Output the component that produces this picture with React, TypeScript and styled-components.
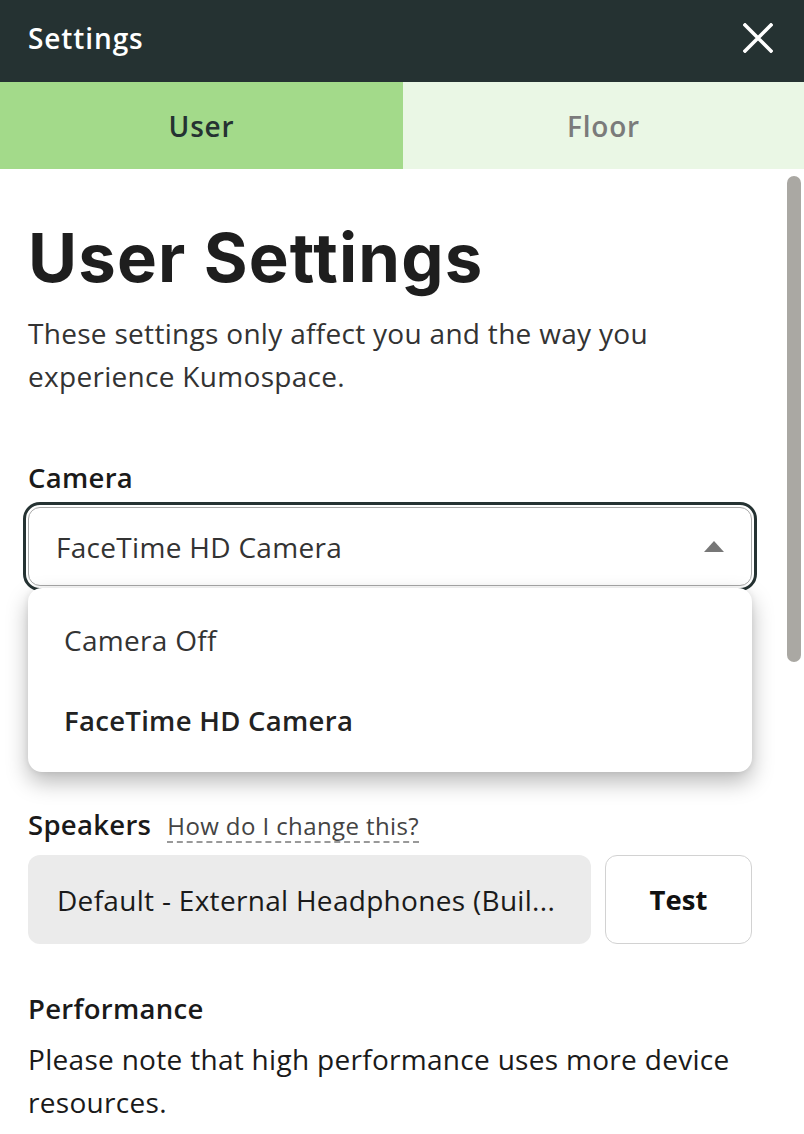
import React from "react";
import styled, { createGlobalStyle } from "styled-components";

const GlobalStyle = createGlobalStyle`
  html, body { margin: 0; padding: 0; background: #ffffff; }
  body { font-family: "Open Sans", "Noto Sans", Arial, sans-serif; color: #222; }
  * { box-sizing: border-box; }
`;

const Modal = styled.div`
  width: 804px;
  height: 1134px;
  display: flex;
  flex-direction: column;
  overflow: hidden;
  background: #fff;
`;

const Header = styled.header`
  height: 82px;
  flex: none;
  background: #253232;
  display: flex;
  align-items: center;
  justify-content: space-between;
  padding: 0 31px 7px 28px;
`;

const HeaderTitle = styled.h1`
  margin: 0;
  font-size: 28px;
  line-height: 32px;
  font-weight: 600;
  letter-spacing: 0.9px;
  color: #fff;
`;

const CloseButton = styled.button`
  border: 0;
  background: none;
  padding: 0;
  width: 30px;
  height: 30px;
  display: flex;
  align-items: center;
  justify-content: center;
  cursor: pointer;
`;

const Tabs = styled.nav`
  height: 87px;
  flex: none;
  display: grid;
  grid-template-columns: 403px 1fr;
`;

const Tab = styled.div<{ $active?: boolean }>`
  display: flex;
  align-items: center;
  justify-content: center;
  font-size: 28px;
  font-weight: 600;
  letter-spacing: 0.8px;
  background: ${(p) => (p.$active ? "#a3da8a" : "#eaf7e5")};
  color: ${(p) => (p.$active ? "#253232" : "#7b7b7b")};
`;

const Body = styled.main`
  flex: 1;
  position: relative;
  overflow: hidden;
  padding: 0 52px 0 28px;
`;

const ScrollThumb = styled.div`
  position: absolute;
  right: 3px;
  top: 7px;
  width: 14px;
  height: 486px;
  border-radius: 7px;
  background: #aaa8a3;
`;

const Title = styled.h2`
  margin: 49px 0 0;
  font-family: Inter, sans-serif;
  font-size: 67px;
  line-height: 80px;
  font-weight: 700;
  letter-spacing: 1.2px;
  color: #1e1e1e;
`;

const Intro = styled.p`
  margin: 14px 0 0;
  font-size: 28px;
  line-height: 43px;
  letter-spacing: 0.3px;
  color: #333;
  max-width: 660px;
`;

const Section = styled.section<{ $gap: number }>`
  margin-top: ${(p) => p.$gap}px;
  position: relative;
`;

const LabelRow = styled.div`
  display: flex;
  align-items: baseline;
  gap: 16px;
  margin-bottom: 13px;
`;

const Label = styled.div`
  font-size: 27.5px;
  font-weight: 600;
  letter-spacing: 0.3px;
  color: #1a1a1a;
  line-height: 32px;
`;

const HelpLink = styled.a`
  font-size: 24px;
  letter-spacing: 0.4px;
  color: #444;
  text-decoration: underline dashed #999;
  text-underline-offset: 6px;
  text-decoration-thickness: 2px;
`;

const SelectWrap = styled.div`
  position: relative;
`;

const SelectBox = styled.div`
  height: 79px;
  border: 1px solid #aaa;
  border-radius: 12px;
  outline: 3px solid #253232;
  outline-offset: 2px;
  display: flex;
  align-items: center;
  justify-content: space-between;
  padding: 0 27px 0 27px;
  font-size: 28px;
  letter-spacing: 0.3px;
  color: #333;
`;

const Caret = styled.div`
  width: 0;
  height: 0;
  border-left: 10px solid transparent;
  border-right: 10px solid transparent;
  border-bottom: 11px solid #777;
`;

const Menu = styled.ul`
  position: absolute;
  left: 0;
  right: 0;
  top: 81px;
  margin: 0;
  padding: 12px 0;
  list-style: none;
  background: #fff;
  border-radius: 14px;
  box-shadow: 0 10px 22px rgba(0, 0, 0, 0.28), 0 0 6px rgba(0, 0, 0, 0.08);
  z-index: 5;
`;

const MenuItem = styled.li<{ $selected?: boolean }>`
  height: 80px;
  display: flex;
  align-items: center;
  padding: 0 36px;
  font-size: ${(p) => (p.$selected ? 27.5 : 28)}px;
  letter-spacing: 0.3px;
  font-weight: ${(p) => (p.$selected ? 600 : 400)};
  color: ${(p) => (p.$selected ? "#222" : "#333")};
`;

const Row = styled.div`
  display: flex;
  gap: 14px;
`;

const GraySelect = styled.div`
  flex: 1;
  min-width: 0;
  height: 89px;
  background: #ebebeb;
  border-radius: 12px;
  display: flex;
  align-items: center;
  padding: 0 29px;
  font-size: 28px;
  letter-spacing: 0.3px;
  color: #1a1a1a;
  white-space: nowrap;
  overflow: hidden;
`;

const TestButton = styled.button`
  width: 147px;
  height: 89px;
  flex: none;
  background: #fff;
  border: 1px solid #d2d2d2;
  border-radius: 12px;
  font-family: "Open Sans", Arial, sans-serif;
  font-size: 27.5px;
  font-weight: 700;
  color: #111;
`;

const Note = styled.p`
  margin: 0;
  font-size: 28px;
  line-height: 43px;
  letter-spacing: 0.3px;
  color: #1a1a1a;
`;

export default function App() {
  return (
    <>
      <GlobalStyle />
      <Modal>
        <Header>
          <HeaderTitle>Settings</HeaderTitle>
          <CloseButton aria-label="Close">
            <svg width="30" height="30" viewBox="0 0 30 30">
              <path d="M2 2 L28 28 M28 2 L2 28" stroke="#fff" strokeWidth="3.6" strokeLinecap="square" />
            </svg>
          </CloseButton>
        </Header>
        <Tabs>
          <Tab $active>User</Tab>
          <Tab>Floor</Tab>
        </Tabs>
        <Body>
          <ScrollThumb />
          <Title>User Settings</Title>
          <Intro>These settings only affect you and the way you experience Kumospace.</Intro>

          <Section $gap={64}>
            <LabelRow>
              <Label>Camera</Label>
            </LabelRow>
            <SelectWrap>
              <SelectBox>
                <span>FaceTime HD Camera</span>
                <Caret />
              </SelectBox>
              <Menu>
                <MenuItem>Camera Off</MenuItem>
                <MenuItem $selected>FaceTime HD Camera</MenuItem>
              </Menu>
            </SelectWrap>
          </Section>

          <Section $gap={48}>
            <LabelRow>
              <Label aria-hidden="true">&nbsp;</Label>
            </LabelRow>
            <Row>
              <GraySelect />
            </Row>
          </Section>

          <Section $gap={41}>
            <LabelRow>
              <Label>Speakers</Label>
              <HelpLink>How do I change this?</HelpLink>
            </LabelRow>
            <Row>
              <GraySelect>Default - External Headphones (Buil...</GraySelect>
              <TestButton>Test</TestButton>
            </Row>
          </Section>

          <Section $gap={49}>
            <LabelRow>
              <Label>Performance</Label>
            </LabelRow>
            <Note>Please note that high performance uses more device resources.</Note>
          </Section>
        </Body>
      </Modal>
    </>
  );
}
